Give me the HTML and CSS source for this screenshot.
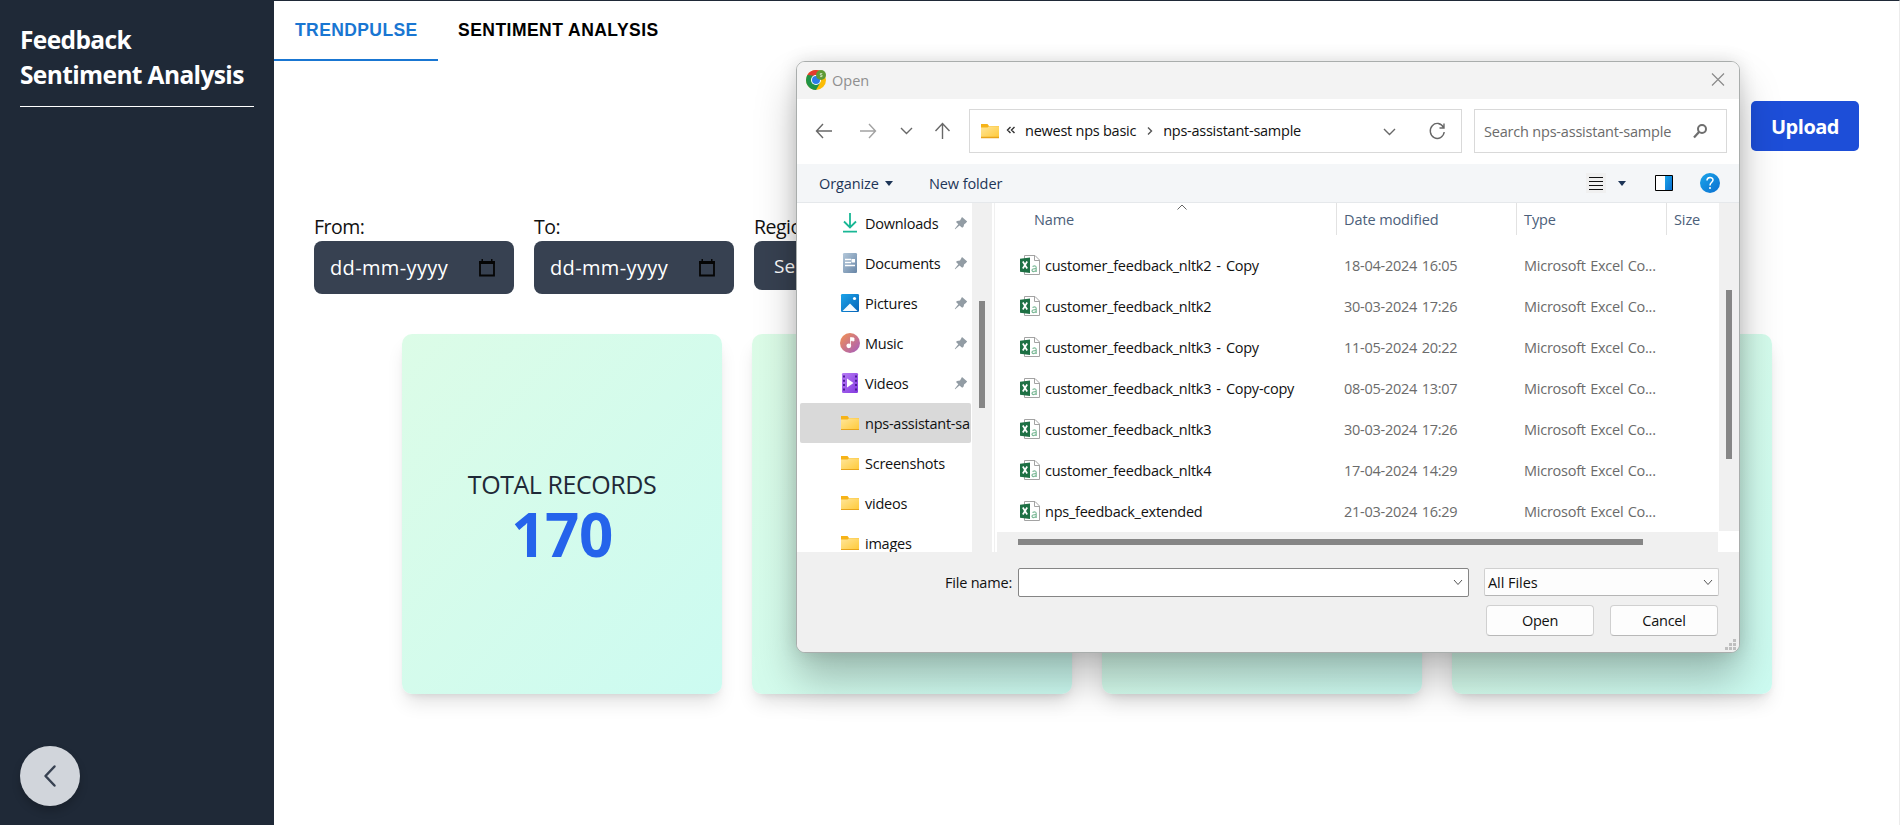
FILE: index.html
```html
<!DOCTYPE html>
<html lang="en">
<head>
<meta charset="utf-8">
<title>Feedback Sentiment Analysis</title>
<link rel="stylesheet" href="styles.css">
</head>
<body>
<svg class="defs" aria-hidden="true">
  <defs>
    <linearGradient id="gFolder" x1="0" y1="0" x2="1" y2="1"><stop offset="0" stop-color="#ffe69a"/><stop offset="1" stop-color="#ffc937"/></linearGradient>
    <linearGradient id="gDoc" x1="0" y1="0" x2="1" y2="1"><stop offset="0" stop-color="#b4c8da"/><stop offset="1" stop-color="#6785a6"/></linearGradient>
    <linearGradient id="gPic" x1="0" y1="0" x2="1" y2="1"><stop offset="0" stop-color="#1ca4ea"/><stop offset="1" stop-color="#0562b6"/></linearGradient>
    <linearGradient id="gMusic" x1="0" y1="0" x2="1" y2="1"><stop offset="0" stop-color="#f5934f"/><stop offset="1" stop-color="#a35bc0"/></linearGradient>
    <linearGradient id="gVid" x1="0" y1="0" x2="1" y2="1"><stop offset="0" stop-color="#b77cf5"/><stop offset="1" stop-color="#8339df"/></linearGradient>
    <linearGradient id="gHelp" x1="0" y1="0" x2="1" y2="1"><stop offset="0" stop-color="#1ba5ea"/><stop offset="1" stop-color="#0a6fd0"/></linearGradient>
    <symbol id="folder" viewBox="0 0 20 20"><path d="M1 3h6.500l1.500 2H19v3H1z" fill="#f6b318"/><path d="M1 6.500h6.500L9 5.200h10V16a1 1 0 0 1-1 1H2a1 1 0 0 1-1-1z" fill="url(#gFolder)"/><path d="M1 16.500h18" stroke="#e8a41c"/></symbol>
    <symbol id="pin" viewBox="0 0 14 14"><path d="M8 1 13.200 5.500 11.600 7.200 10.200 8.300 9.500 10.800 8.200 11.800 5.500 9.500 1.200 13.200.8 12.800 4.300 8.300 2 6 3 5 6 4.400z" fill="#929ca4"/></symbol>
    <symbol id="csv" viewBox="0 0 20 20"><path d="M4.500.5H15l4.500 4.500v14.500h-15z" fill="#fff" stroke="#a3a3a3"/><path d="M14.500.5v5h5" fill="none" stroke="#a3a3a3"/><path d="M0 3.700l10-1.200v15.500L0 16.800z" fill="#1d7044"/><path d="M2.800 6.500l4.400 7M7.200 6.500l-4.400 7" stroke="#fff" stroke-width="1.700"/><path d="M12.500 11.500q3.500-1.500 3.700 1v4.500M16 13.700q-4-.2-4 1.700 1 2.300 4 .2" fill="none" stroke="#7dba98" stroke-width="1.200"/></symbol>
  </defs>
</svg>
<div class="app">
  <aside class="side">
    <h1 class="brand">Feedback<br>Sentiment Analysis</h1>
    <button class="collapse" aria-label="Collapse"><svg width="30" height="30" viewBox="0 0 30 30"><path d="M19.500 5.500 10.500 15l9 9.500" fill="none" stroke="#374151" stroke-width="2.500" stroke-linecap="round" stroke-linejoin="round"/></svg></button>
  </aside>
  <main class="main">
    <nav class="tabs"><a class="tab active">TRENDPULSE</a><a class="tab">SENTIMENT ANALYSIS</a></nav>
    <div class="actions"><button class="upload">Upload</button></div>
    <div class="filters">
      <div class="field"><label>From:</label><div class="date"><span>dd-mm-yyyy</span><svg width="18" height="20" viewBox="0 0 18 20"><path d="M2 4h14v13.500H2z" fill="none" stroke="#050505" stroke-width="1.800"/><path d="M1 3h16v3H1zM3.500 1h1.500v3h-1.500zM13 1h1.500v3h-1.500z" fill="#050505"/></svg></div></div>
      <div class="field"><label>To:</label><div class="date"><span>dd-mm-yyyy</span><svg width="18" height="20" viewBox="0 0 18 20"><path d="M2 4h14v13.500H2z" fill="none" stroke="#050505" stroke-width="1.800"/><path d="M1 3h16v3H1zM3.500 1h1.500v3h-1.500zM13 1h1.500v3h-1.500z" fill="#050505"/></svg></div></div>
      <div class="field"><label>Region:</label><div class="pick">Select</div></div>
    </div>
    <section class="cards">
      <article class="card"><h2>TOTAL RECORDS</h2><p>170</p></article>
      <article class="card"></article>
      <article class="card"></article>
      <article class="card"></article>
    </section>
  </main>
</div>

<div class="dialog" role="dialog">
  <header class="titlebar">
    <svg width="20" height="20" viewBox="0 0 20 20"><circle cx="10" cy="10" r="10" fill="#fbbc05"/><path d="M10 10 1.340 5A10 10 0 0 1 18.660 5z" fill="#e33b2e"/><path d="M1.340 5A10 10 0 0 0 10 20l4.300-7.500L10 10z" fill="#1f9347"/><path d="M1.340 5 5.700 12.500 10 6z" fill="#1f9347"/><path d="M10 5h8.660L14 9z" fill="#e33b2e"/><circle cx="10" cy="10" r="5" fill="#fff"/><circle cx="10" cy="10" r="4" fill="#2b7de9"/><circle cx="15" cy="5" r="5" fill="#5f9a35"/><path d="M16.300 3.500h-2v1.500h1.700v1.600h-2" fill="none" stroke="#dcebcf" stroke-width=".8"/></svg>
    <span class="title">Open</span>
    <svg class="push" width="14" height="14" viewBox="0 0 14 14"><path d="M1 .5l12 12M13 .5 1 12.500" stroke="#8b8b8b" stroke-width="1.200"/></svg>
  </header>
  <div class="navrow">
    <div class="arrows">
      <svg width="18" height="18" viewBox="0 0 18 18"><path d="M17 9H1.500M8 2 1.500 9 8 16" stroke="#686868"/></svg>
      <svg width="18" height="18" viewBox="0 0 18 18"><path d="M1 9h15.500M10 2l6.500 7-6.500 7" stroke="#a2a2a2"/></svg>
      <svg width="18" height="18" viewBox="0 0 18 18"><path d="M4 6 9.500 11.500 15 6" stroke="#686868"/></svg>
      <svg width="18" height="18" viewBox="0 0 18 18"><path d="M9.500 17V1.500M2.500 9l7-7.500 7 7.500" stroke="#686868"/></svg>
    </div>
    <div class="address">
      <svg width="20" height="20"><use href="#folder"/></svg>
      <svg class="laquo" width="10" height="8" viewBox="0 0 10 8"><path d="M4.500 1 1.500 4l3 3M8.500 1l-3 3 3 3" stroke="#333"/></svg>
      <span class="crumb">newest nps basic</span>
      <svg class="sep" width="6" height="8" viewBox="0 0 6 8"><path d="M1 .5 4.500 4 1 7.500" stroke="#555"/></svg>
      <span class="crumb">nps-assistant-sample</span>
      <svg class="push" width="14" height="10" viewBox="0 0 14 10"><path d="M2 3 7.500 8.500 13 3" stroke="#686868"/></svg>
      <svg class="refresh" width="18" height="20" viewBox="0 0 18 20"><path d="M15.500 6.500A7 7.500 0 1 0 16.200 11M16 2.500v4.500h-4.500" stroke="#686868"/></svg>
    </div>
    <div class="search"><span>Search nps-assistant-sample</span><svg width="16" height="16" viewBox="0 0 16 16"><circle cx="10" cy="6" r="4" stroke="#6e6e6e" stroke-width="2"/><path d="M7 9 2 14.500" stroke="#6e6e6e" stroke-width="2.200"/></svg></div>
  </div>
  <div class="toolbar">
    <span class="organize">Organize</span><svg width="8" height="5" viewBox="0 0 8 5"><path d="M0 0h8L4 5z" fill="#1d3557"/></svg>
    <span class="newf">New folder</span>
    <svg class="push lines" width="20" height="20" viewBox="0 0 20 20"><path d="M3 4.500h14M3 8.500h14M3 12.500h14M3 16.500h14" stroke="#111" shape-rendering="crispEdges"/></svg>
    <svg class="caret" width="8" height="5" viewBox="0 0 8 5"><path d="M0 0h8L4 5z" fill="#1d3557"/></svg>
    <svg class="pane" width="18" height="16" viewBox="0 0 18 16"><path d="M.5.500h17v15H.5z" fill="#fff" stroke="#000"/><path d="M10 1h7v14h-7z" fill="url(#gHelp)"/></svg>
    <svg class="help" width="20" height="20" viewBox="0 0 20 20"><circle cx="10" cy="10" r="10" fill="url(#gHelp)"/><path d="M7 7.500c0-4 6-4 6-.5 0 2.200-3 2.500-3 5.500" fill="none" stroke="#fff" stroke-width="1.500"/><circle cx="10" cy="15" r="1" fill="#fff"/></svg>
  </div>
  <div class="content">
    <ul class="tree">
      <li><svg width="20" height="20" viewBox="0 0 20 20"><path d="M10 0v14M4 8.500l6 6 6-6M3 18.600h14" fill="none" stroke="#19b795" stroke-width="1.800"/></svg><span>Downloads</span><svg class="pin"><use href="#pin"/></svg></li>
      <li><svg width="20" height="20" viewBox="0 0 20 20"><rect x="3" width="14" height="20" rx="1.200" fill="url(#gDoc)"/><path d="M5 6.500h6M5 9.500h6M5 12.500h10" stroke="#fff" stroke-width="1.300"/><path d="M11.500 6h3.500v3.500h-3.500z" fill="#fff"/></svg><span>Documents</span><svg class="pin"><use href="#pin"/></svg></li>
      <li><svg width="20" height="20" viewBox="0 0 20 20"><rect x="1" y="1" width="18" height="18" rx="1.200" fill="url(#gPic)"/><path d="M2.500 18 10 10.500 17.500 18z" fill="#f3faff"/><circle cx="14.500" cy="5.500" r="1.600" fill="#fff"/></svg><span>Pictures</span><svg class="pin"><use href="#pin"/></svg></li>
      <li><svg width="20" height="20" viewBox="0 0 20 20"><circle cx="10" cy="10" r="10" fill="url(#gMusic)"/><circle cx="8.800" cy="12.800" r="2.400" fill="#fff"/><path d="M10.500 13V4.500L14 5v3l-3.500-.5" fill="#fff" stroke="#fff" stroke-width=".8"/></svg><span>Music</span><svg class="pin"><use href="#pin"/></svg></li>
      <li><svg width="20" height="20" viewBox="0 0 20 20"><rect x="2" width="16" height="20" rx="1.200" fill="url(#gVid)"/><path d="M4 2.500v17M16 2.500v17" stroke="#4b1c96" stroke-width="2" stroke-dasharray="2 2.300"/><path d="M7 5.500v9l6.500-4.500z" fill="#fff"/></svg><span>Videos</span><svg class="pin"><use href="#pin"/></svg></li>
      <li class="sel"><svg width="20" height="20"><use href="#folder"/></svg><span>nps-assistant-sa</span></li>
      <li><svg width="20" height="20"><use href="#folder"/></svg><span>Screenshots</span></li>
      <li><svg width="20" height="20"><use href="#folder"/></svg><span>videos</span></li>
      <li><svg width="20" height="20"><use href="#folder"/></svg><span>images</span></li>
    </ul>
    <div class="vbar treebar"><i></i></div>
    <div class="split"></div>
    <div class="files">
      <div class="head"><span class="c-name">Name<svg class="sort" width="10" height="6" viewBox="0 0 10 6"><path d="M.5 5.500 5 1l4.500 4.500" fill="none" stroke="#666"/></svg></span><span>Date modified</span><span>Type</span><span class="c-size">Size</span></div>
      <div class="row"><svg><use href="#csv"/></svg><b>customer_feedback_nltk2 - Copy</b><span>18-04-2024 16:05</span><em>Microsoft Excel Co...</em></div>
      <div class="row"><svg><use href="#csv"/></svg><b>customer_feedback_nltk2</b><span>30-03-2024 17:26</span><em>Microsoft Excel Co...</em></div>
      <div class="row"><svg><use href="#csv"/></svg><b>customer_feedback_nltk3 - Copy</b><span>11-05-2024 20:22</span><em>Microsoft Excel Co...</em></div>
      <div class="row"><svg><use href="#csv"/></svg><b>customer_feedback_nltk3 - Copy-copy</b><span>08-05-2024 13:07</span><em>Microsoft Excel Co...</em></div>
      <div class="row"><svg><use href="#csv"/></svg><b>customer_feedback_nltk3</b><span>30-03-2024 17:26</span><em>Microsoft Excel Co...</em></div>
      <div class="row"><svg><use href="#csv"/></svg><b>customer_feedback_nltk4</b><span>17-04-2024 14:29</span><em>Microsoft Excel Co...</em></div>
      <div class="row"><svg><use href="#csv"/></svg><b>nps_feedback_extended</b><span>21-03-2024 16:29</span><em>Microsoft Excel Co...</em></div>
      <div class="hbar"><i></i></div>
    </div>
    <div class="vbar listbar"><i></i></div>
  </div>
  <footer class="foot">
    <div class="line">
      <label>File name:</label>
      <div class="fname"><svg width="10" height="7" viewBox="0 0 10 7"><path d="M1 1l4 4.500L9 1" stroke="#555"/></svg></div>
      <div class="ftype"><span>All Files</span><svg width="10" height="7" viewBox="0 0 10 7"><path d="M1 1l4 4.500L9 1" stroke="#555"/></svg></div>
    </div>
    <div class="line btns"><button>Open</button><button>Cancel</button></div>
    <svg class="grip" width="12" height="12" viewBox="0 0 12 12"><path d="M8 0h3v3H8zM8 4h3v3H8zM8 8h3v3H8zM4 4h3v3H4zM4 8h3v3H4zM0 8h3v3H0z" fill="#bfbfbf"/></svg>
  </footer>
</div>
</body>
</html>
```

FILE: styles.css
```css
* { box-sizing: border-box; }
body { margin: 0; width: 1900px; height: 825px; overflow: hidden; position: relative; background: #fff; font-family: "Open Sans", "Noto Sans", sans-serif; }
button { font: inherit; border: 0; padding: 0; }
ul { list-style: none; margin: 0; padding: 0; }
svg { flex: none; display: block; }
.defs { position: absolute; width: 0; height: 0; }
.push { margin-left: auto; }

.app { display: flex; height: 825px; border-top: 1px solid #1f2937; border-right: 1px solid #ececec; }
.side { width: 274px; background: #1f2937; padding: 21px 20px 19px; display: flex; flex-direction: column; justify-content: space-between; }
.brand { margin: 0; height: 85px; border-bottom: 1px solid #fff; color: #fff; font-size: 24.5px; line-height: 35px; font-weight: 700; letter-spacing: -0.62px; white-space: nowrap; }
.collapse { width: 60px; height: 60px; border-radius: 50%; background: #d1d5db; display: grid; place-items: center; box-shadow: 0 5px 8px rgba(0,0,0,.2); }

.main { flex: 1; display: flex; flex-direction: column; }
.tabs { display: flex; height: 60px; font-family: "Liberation Sans", Arial, sans-serif; font-weight: 700; font-size: 17.5px; letter-spacing: 0.47px; }
.tab { height: 60px; padding: 0 20px; line-height: 59px; white-space: nowrap; color: #000; }
.tab.active { width: 164px; color: #1976d2; border-bottom: 2px solid #1976d2; padding-left: 21px; letter-spacing: 0.4px; }
.actions { height: 90px; padding: 40px 40px 0 0; display: flex; justify-content: flex-end; }
.upload { width: 108px; height: 50px; border-radius: 5px; background: #1d4ed8; color: #fff; font-size: 20px; font-weight: 700; letter-spacing: -0.5px; }
.filters { display: flex; gap: 20px; padding: 62px 0 0 40px; height: 183px; }
.field { width: 200px; }
.field label { display: block; height: 28px; line-height: 28px; font-size: 19.5px; color: #111; letter-spacing: -0.5px; }
.date { height: 53px; border-radius: 8px; background: #374151; color: #fff; display: flex; align-items: center; justify-content: space-between; padding: 0 18px 0 16px; font-size: 20px; letter-spacing: 0.36px; }
.pick { height: 49px; line-height: 50px; border-radius: 8px; background: #374151; color: #fff; padding-left: 20px; font-size: 19px; }
.cards { display: flex; gap: 30px; padding-left: 128px; }
.card { width: 320px; height: 360px; border-radius: 10px; background: linear-gradient(to bottom right, #dcfce7, #ccfbf1); box-shadow: 0 12px 19px -4px rgba(0,0,0,.12), 0 5px 8px -5px rgba(0,0,0,.12); display: flex; flex-direction: column; align-items: center; justify-content: center; padding-top: 3px; }
.card h2 { margin: 0; font-size: 25px; line-height: 35px; font-weight: 500; color: #1f2937; letter-spacing: -0.45px; }
.card p { margin: 2px 0 0; font-size: 60px; line-height: 60px; font-weight: 700; color: #2563eb; letter-spacing: -0.5px; }

/* File chooser window floating above the page */
.dialog { position: absolute; left: 796px; top: 61px; width: 944px; height: 592px; border: 1px solid #a9adac; border-radius: 9px; background: #fff; overflow: hidden; display: flex; flex-direction: column; font-size: 14.5px; letter-spacing: -0.25px; color: #111; white-space: nowrap; box-shadow: 0 26px 40px rgba(0,0,0,.25), 0 0 18px rgba(0,0,0,.13); }
.titlebar { height: 37px; background: #f3f3f3; display: flex; align-items: center; padding: 0 14px 1px 9px; }
.title { margin-left: 6px; color: #8f8f8f; letter-spacing: 0; }
.navrow { height: 65px; display: flex; align-items: center; padding: 0 12px 2px 18px; }
.navrow svg { fill: none; stroke-width: 1.4; }
.arrows { display: flex; width: 154px; }
.arrows svg { margin-right: 26px; }
.arrows svg:nth-child(2) { margin-right: 20px; }
.arrows svg:nth-child(3) { margin-right: 18px; }
.arrows svg:nth-child(4) { margin-right: 0; }
.address { width: 493px; height: 44px; border: 1px solid #d9d9d9; display: flex; align-items: center; padding: 0 15px 0 10px; }
.laquo { margin: -2px 9px 0 6px; }
.sep { margin: 0 10px 0 11px; }
.refresh { margin-left: 32px; }
.search { margin-left: 12px; width: 253px; height: 44px; border: 1px solid #d9d9d9; display: flex; align-items: center; justify-content: space-between; padding: 1px 18px 0 9px; color: #6b6b6b; letter-spacing: -0.2px; }
.toolbar { height: 39px; background: #f4f6f8; border-bottom: 1px solid #e5e8eb; display: flex; align-items: center; padding: 0 19px 0 22px; color: #1d3557; letter-spacing: -0.1px; }
.organize { width: 66px; }
.newf { margin-left: 36px; }
.lines { background: #f0f0f0; }
.caret { margin-left: 12px; }
.pane { margin-left: 29px; }
.help { margin-left: 27px; }
.content { height: 349px; display: flex; background: #fff; }
.tree { width: 175px; height: 349px; overflow: hidden; padding-left: 3px; }
.tree li { position: relative; width: 171px; height: 40px; padding-left: 40px; display: flex; align-items: center; gap: 5px; overflow: hidden; border-radius: 2px; }
.tree li .pin { position: absolute; left: 154px; top: 13px; width: 14px; height: 14px; }
.tree .sel { background: #d9d9d9; }
.vbar { width: 20px; background: #f0f0f0; }
.vbar i, .hbar i { display: block; background: #868686; }
.treebar i { width: 6px; height: 107px; margin: 98px 0 0 7px; }
.split { width: 3px; border-right: 1px solid #f0f0f0; }
.files { width: 724px; padding-left: 2px; display: flex; flex-direction: column; }
.head { display: flex; height: 42px; line-height: 34px; padding-left: 37px; color: #4c607a; letter-spacing: -0.1px; }
.head span { position: relative; width: 150px; height: 32px; border-left: 1px solid #e2e2e2; padding-left: 7px; }
.head span:nth-child(2) { width: 180px; }
.head span.c-name { width: 302px; border: 0; padding: 0; }
.head span.c-size { width: 50px; }
.head .sort { position: absolute; left: 143px; top: 1px; }
.row { height: 41px; padding-left: 23px; display: flex; align-items: center; color: #6b6b6b; }
.row svg { width: 20px; height: 20px; margin-top: -2px; }
.row b { font-weight: 400; color: #111; width: 299px; margin-left: 5px; word-spacing: 1.6px; }
.row span { width: 180px; word-spacing: 1px; }
.row em { font-style: normal; word-spacing: 0.9px; }
.hbar { height: 20px; background: #f0f0f0; padding: 7px 0 0 21px; width: 721px; }
.hbar i { width: 625px; height: 6px; }
.listbar { height: 328px; }
.listbar i { width: 6px; height: 169px; margin: 87px 0 0 7px; }
.foot { position: relative; flex: 1; background: #f0f0f0; padding: 16px 20px 0 0; }
.line { display: flex; justify-content: flex-end; }
.line label { line-height: 29px; margin-right: 6px; letter-spacing: -0.2px; }
.fname { width: 451px; height: 29px; border: 1px solid #858585; border-radius: 2px; background: #fff; display: flex; align-items: center; justify-content: flex-end; padding-right: 5px; }
.ftype { margin-left: 15px; width: 235px; height: 28px; border: 1px solid #d0d0d0; border-bottom-color: #b5b5b5; border-radius: 2px; background: #fdfdfd; display: flex; align-items: center; justify-content: space-between; padding: 0 5px 0 3px; letter-spacing: -0.05px; }
.fname svg, .ftype svg { fill: none; stroke-width: 1; }
.btns { gap: 16px; margin-top: 8px; padding-right: 1px; }
.btns button { width: 108px; height: 31px; border: 1px solid #d0d0d0; border-bottom-color: #b8b8b8; border-radius: 4px; background: #fdfdfd; color: #111; letter-spacing: inherit; }
.grip { position: absolute; right: 2px; bottom: 1px; }
```
